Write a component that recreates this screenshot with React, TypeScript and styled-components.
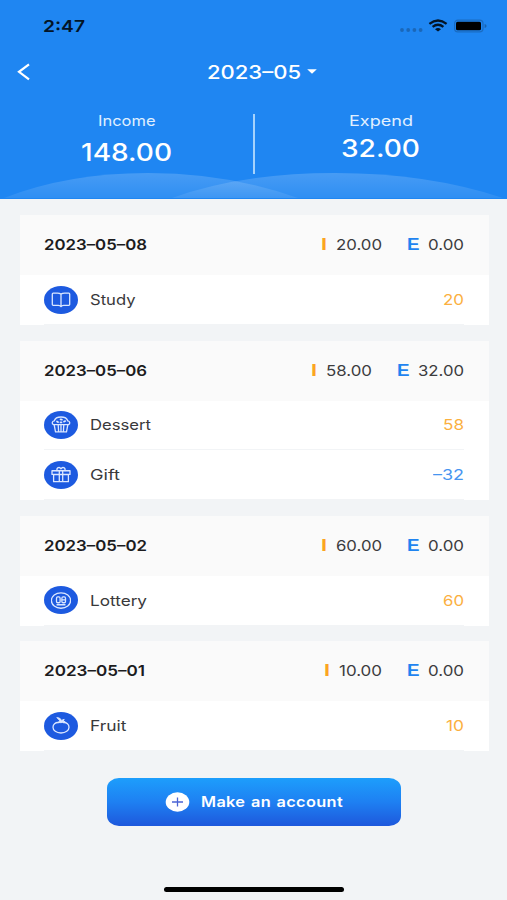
import React, { useLayoutEffect, useRef, useState } from 'react';
import styled, { createGlobalStyle } from 'styled-components';

const Global = createGlobalStyle`
  * { box-sizing: border-box; }
  html, body { margin: 0; padding: 0; background: #f2f4f6; }
  body { font-family: Inter, "Noto Sans", sans-serif; overflow: hidden; }
`;

/* ---------- wide lettering ---------- */

const WideBox = styled.span<{ $w: number }>`
  display: block;
  flex: none;
  width: ${(p) => p.$w}px;
  text-align: left;
  white-space: nowrap;
`;

const WideInner = styled.span`
  display: inline-block;
  transform-origin: 0 50%;
`;

function Wide({ w, children }: { w: number; children: React.ReactNode }) {
  const ref = useRef<HTMLSpanElement>(null);
  const [scale, setScale] = useState(1);
  useLayoutEffect(() => {
    if (ref.current) {
      const natural = parseFloat(getComputedStyle(ref.current).width);
      if (natural > 0) setScale(w / natural);
    }
  }, [w, children]);
  return (
    <WideBox $w={w}>
      <WideInner ref={ref} style={{ transform: `scaleX(${scale})` }}>
        {children}
      </WideInner>
    </WideBox>
  );
}

/* ---------- page ---------- */

const Screen = styled.div`
  width: 507px;
  height: 900px;
  display: flex;
  flex-direction: column;
  background: #f2f4f6;
  overflow: hidden;
`;

const Header = styled.header`
  position: relative;
  flex: none;
  height: 199px;
  background: #1f86f2;
  color: #fff;
`;

const Waves = styled.svg`
  position: absolute;
  left: 0;
  bottom: 0;
  display: block;
`;

const StatusBar = styled.div`
  height: 52px;
  display: flex;
  align-items: center;
  justify-content: space-between;
  padding: 0 20px 0 43px;
  color: #031426;
  font-size: 16.5px;
  font-weight: 600;
  line-height: 20px;
`;

const StatusIcons = styled.svg`
  display: block;
`;

const TitleBar = styled.div`
  height: 39px;
  display: grid;
  grid-template-columns: 207px 1fr;
  align-items: center;
`;

const BackButton = styled.button`
  justify-self: start;
  display: flex;
  border: 0;
  padding: 0 0 0 17px;
  background: none;
  color: inherit;
`;

const Month = styled.div`
  display: flex;
  align-items: center;
  gap: 6px;
  font-size: 18.5px;
  font-weight: 500;
  line-height: 24px;
`;

const Summary = styled.div`
  display: grid;
  grid-template-columns: 1fr 2px 1fr;
`;

const Divider = styled.div`
  height: 60px;
  margin-top: 23px;
  background: #a5d2fc;
`;

const Total = styled.div<{ $gap: number }>`
  display: flex;
  flex-direction: column;
  align-items: center;
  gap: ${(p) => p.$gap}px;
  padding-top: 20px;
`;

const TotalLabel = styled.div`
  font-size: 14.5px;
  line-height: 20px;
  color: #e0f0ff;
`;

const TotalValue = styled.div`
  font-size: 24px;
  font-weight: 500;
  line-height: 30px;
`;

const List = styled.main`
  display: flex;
  flex-direction: column;
  gap: 15.8px;
  padding: 16.4px 18.5px 0 20px;
`;

const Card = styled.section`
  background: #fff;
`;

const DayHeader = styled.div`
  height: 59.8px;
  display: flex;
  align-items: center;
  padding: 0 24.5px 0 24px;
  background: #fafafa;
  font-size: 15px;
  line-height: 20px;
  color: #3c3c3e;
`;

const DayDate = styled.div`
  margin-right: auto;
  font-weight: 600;
  color: #1c1c1e;
`;

const Tag = styled.div<{ $color: string; $after: number }>`
  color: ${(p) => p.$color};
  font-family: "Liberation Sans", Arial, sans-serif;
  font-weight: 700;
  font-size: 16px;
  margin-right: ${(p) => p.$after}px;
`;

const IncomeSum = styled.div`
  margin-right: 25px;
`;

const Row = styled.div`
  height: 49.8px;
  display: flex;
  align-items: center;
  margin: 0 24.5px 0 24px;
  border-bottom: 1px solid #f2f4f6;
  font-size: 14.7px;
  line-height: 20px;
  color: #39393b;
`;

const Bubble = styled.div`
  flex: none;
  width: 34px;
  height: 28px;
  margin-right: 12px;
  border-radius: 50%;
  background: #1d5ae0;
  display: flex;
  align-items: center;
  justify-content: center;
`;

const RowName = styled.div`
  margin-right: auto;
  padding-top: 1px;
`;

const Amount = styled.div<{ $negative?: boolean }>`
  padding-top: 1px;
  color: ${(p) => (p.$negative ? '#4695f0' : '#fbb03f')};
`;

const AddButton = styled.button`
  flex: none;
  width: 294px;
  height: 48px;
  margin: 26.6px 0 0 107px;
  display: flex;
  align-items: center;
  gap: 11px;
  padding: 0 0 0 58px;
  border: 0;
  border-radius: 12px / 10px;
  background: linear-gradient(180deg, #1d9efc 0%, #1e80f2 50%, #1e58dc 100%);
  color: #fff;
  font: 600 14.5px/20px Inter, "Noto Sans", sans-serif;
  letter-spacing: 0.3px;
  word-spacing: 1px;
`;

const HomeBar = styled.div`
  flex: none;
  width: 180px;
  height: 5px;
  margin: auto auto 8px 164px;
  border-radius: 3px;
  background: #000;
`;

/* ---------- category drawings ---------- */

type IconName = 'study' | 'dessert' | 'gift' | 'lottery' | 'fruit';

const Glyph = styled.svg`
  display: block;
  fill: none;
  stroke: #dbe7ff;
  stroke-width: 1.3;
  stroke-linecap: round;
  stroke-linejoin: round;
`;

const drawings: Record<IconName, React.ReactNode> = {
  study: (
    <path d="M11 3C10 2.300 8.800 2 7.500 2H3.200q-.9 0-.9.9v10.200q0 .8.9.8h5.200q1.800 0 2.600 1.300.8-1.300 2.600-1.300h5.200q.9 0 .9-.8V2.900q0-.9-.9-.9h-4.300C13.200 2 12 2.300 11 3V14.500" />
  ),
  dessert: (
    <>
      <path d="M3.600 8.300C1.400 7.600 2 5 4.200 4.800 4.900 2.600 7.800 1 11 1s6.100 1.600 6.800 3.800C20 5 20.600 7.600 18.400 8.300z" />
      <path d="M4.200 8.500l1.300 6.900h11l1.300-6.900M8.200 8.500l.4 6.700M11 8.500v6.700M13.800 8.500l-.4 6.700" />
      <path d="M7 5.300l1.200.7M10.500 3.200l1.400.4M14 5.400l1.300-.5M10.500 6.300h1" strokeWidth="1.700" />
    </>
  ),
  gift: (
    <>
      <path d="M2 4.600h18v3.600H2zM3.600 8.400h14.800v6.800H3.600zM9.300 4.700v10.400M12.700 4.700v10.400" />
      <path d="M7 4.500C6.400 1.400 9.600.6 11 2.700 12.400.6 15.600 1.400 15 4.500" />
    </>
  ),
  lottery: (
    <>
      <ellipse cx="11" cy="8.300" rx="9.600" ry="7.500" />
      <rect x="6.500" y="4.800" width="3.600" height="5.600" rx="1.200" />
      <rect x="11.900" y="4.800" width="3.600" height="5.600" rx="1.200" />
      <path d="M12.200 7.600h3M7 12.400h8" />
    </>
  ),
  fruit: (
    <>
      <path d="M8.600 5.400C5.300 5.100 3 7.200 3 9.900c0 3.100 3.300 5.600 8 5.600s8-2.500 8-5.600c0-2.700-2.300-4.800-5.600-4.500" />
      <path d="M7.200.6c2 .2 3.600 1 4.200 2.700l2.800-1-.9 1.600 1.900.7-4.200.9-3.200-.2 1.900-1.400z" fill="#dbe7ff" strokeWidth=".9" />
    </>
  ),
};

/* ---------- data ---------- */

interface Entry {
  icon: IconName;
  name: string;
  nameW: number;
  amount: string;
  amountW: number;
}

interface Day {
  date: string;
  dateW: number;
  income: string;
  incomeW: number;
  expend: string;
  expendW: number;
  entries: Entry[];
}

const days: Day[] = [
  {
    date: '2023–05–08', dateW: 103, income: '20.00', incomeW: 46, expend: '0.00', expendW: 36,
    entries: [{ icon: 'study', name: 'Study', nameW: 45.5, amount: '20', amountW: 21 }],
  },
  {
    date: '2023–05–06', dateW: 103, income: '58.00', incomeW: 46, expend: '32.00', expendW: 46,
    entries: [
      { icon: 'dessert', name: 'Dessert', nameW: 61, amount: '58', amountW: 21 },
      { icon: 'gift', name: 'Gift', nameW: 30, amount: '–32', amountW: 31 },
    ],
  },
  {
    date: '2023–05–02', dateW: 103, income: '60.00', incomeW: 46, expend: '0.00', expendW: 36,
    entries: [{ icon: 'lottery', name: 'Lottery', nameW: 57, amount: '60', amountW: 21 }],
  },
  {
    date: '2023–05–01', dateW: 101, income: '10.00', incomeW: 43, expend: '0.00', expendW: 36,
    entries: [{ icon: 'fruit', name: 'Fruit', nameW: 36.5, amount: '10', amountW: 18 }],
  },
];

export default function App() {
  return (
    <Screen>
      <Global />
      <Header>
        <Waves width="507" height="28" viewBox="0 0 507 28">
          <defs>
            <linearGradient id="wave" x1="0" y1="0" x2="0" y2="1">
              <stop offset="0" stopColor="#fff" stopOpacity=".18" />
              <stop offset="1" stopColor="#fff" stopOpacity=".07" />
            </linearGradient>
          </defs>
          <path d="M4 27Q68 2 148 2T298 27z" fill="url(#wave)" />
          <path d="M172 27Q242 2 335 2T503 27z" fill="url(#wave)" />
        </Waves>
        <StatusBar>
          <Wide w={42}>2:47</Wide>
          <StatusIcons width="88" height="16" viewBox="0 0 88 16">
            <g fill="#1a67b9">
              <circle cx="3" cy="12" r="1.900" />
              <circle cx="9.200" cy="12" r="1.900" />
              <circle cx="15.400" cy="12" r="1.900" />
              <circle cx="21.600" cy="12" r="1.900" />
            </g>
            <g fill="none" stroke="#031426" strokeWidth="2.300">
              <path d="M30.400 5.800Q39 -.9 47.600 5.800" />
              <path d="M33.600 8.900Q39 4.700 44.400 8.900" />
            </g>
            <path d="M36 11.200Q39 9 42 11.200L39 13.600z" fill="#031426" />
            <rect x="55.600" y="2.100" width="28.400" height="11.800" rx="3.300" fill="none" stroke="#1a6cc2" strokeWidth="1.200" />
            <rect x="57" y="3.800" width="25" height="8.500" rx="1.500" fill="#000" />
            <path d="M85.600 6q2 .4 2 2t-2 2z" fill="#1a62ae" />
          </StatusIcons>
        </StatusBar>
        <TitleBar>
          <BackButton aria-label="Back">
            <svg width="14" height="18" viewBox="0 0 14 18" fill="none" stroke="#fff" strokeWidth="2.200">
              <path d="M12 1.300L2 8.800l10 7.600" />
            </svg>
          </BackButton>
          <Month>
            <Wide w={94}>2023–05</Wide>
            <svg width="10" height="5" viewBox="0 0 10 5">
              <path d="M.2.200h9.600L5 4.800z" fill="#fff" />
            </svg>
          </Month>
        </TitleBar>
        <Summary>
          <Total $gap={6.5}>
            <TotalLabel><Wide w={57.5}>Income</Wide></TotalLabel>
            <TotalValue><Wide w={91}>148.00</Wide></TotalValue>
          </Total>
          <Divider />
          <Total $gap={3}>
            <TotalLabel><Wide w={64}>Expend</Wide></TotalLabel>
            <TotalValue><Wide w={79}>32.00</Wide></TotalValue>
          </Total>
        </Summary>
      </Header>
      <List>
        {days.map((d) => (
          <Card key={d.date}>
            <DayHeader>
              <DayDate><Wide w={d.dateW}>{d.date}</Wide></DayDate>
              <Tag $color="#fba51f" $after={9}><Wide w={6}>I</Wide></Tag>
              <IncomeSum><Wide w={d.incomeW}>{d.income}</Wide></IncomeSum>
              <Tag $color="#1f84f0" $after={9}><Wide w={12.5}>E</Wide></Tag>
              <Wide w={d.expendW}>{d.expend}</Wide>
            </DayHeader>
            {d.entries.map((e) => (
              <Row key={e.name}>
                <Bubble>
                  <Glyph width="20" height="17" viewBox="1 0 20 16.5" preserveAspectRatio="none">
                    {drawings[e.icon]}
                  </Glyph>
                </Bubble>
                <RowName><Wide w={e.nameW}>{e.name}</Wide></RowName>
                <Amount $negative={e.amount.startsWith('–')}>
                  <Wide w={e.amountW}>{e.amount}</Wide>
                </Amount>
              </Row>
            ))}
          </Card>
        ))}
      </List>
      <AddButton>
        <svg width="25" height="20" viewBox="0 0 25 20">
          <ellipse cx="12.500" cy="10" rx="11.800" ry="9.700" fill="#fff" />
          <path d="M7 10h11M12.500 5.400v9.200" stroke="#4a63d4" strokeWidth="1.300" />
        </svg>
        <Wide w={142}>Make an account</Wide>
      </AddButton>
      <HomeBar />
    </Screen>
  );
}
